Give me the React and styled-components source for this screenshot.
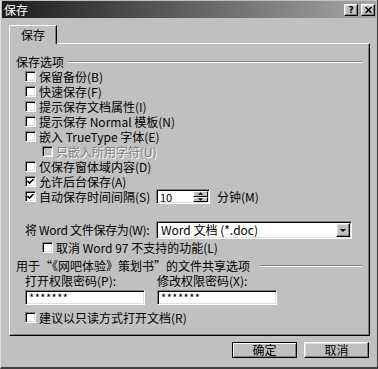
import React from 'react'
import styled, { createGlobalStyle, css } from 'styled-components'

const GlobalStyle = createGlobalStyle`
  html, body {
    margin: 0;
    padding: 0;
    background: #c0c0c0;
  }
  body {
    font-family: "Noto Sans CJK SC", "Noto Sans", sans-serif;
    font-size: 12px;
    color: #000;
  }
`

const raised = css`
  border: 1px solid;
  border-color: #fff #000 #000 #fff;
  box-shadow: inset -1px -1px #808080, inset 1px 1px #dfdfdf;
`
const sunken = css`
  border: 1px solid;
  border-color: #808080 #fff #fff #808080;
  box-shadow: inset 1px 1px #000, inset -1px -1px #dfdfdf;
`

const Dialog = styled.div`
  width: 378px;
  height: 369px;
  box-sizing: border-box;
  background: #c0c0c0;
  border-left: 1px solid #dfdfdf;
  border-right: 1px solid #404040;
  border-bottom: 2px solid #404040;
  padding: 1px 1px 0 1px;
  display: flex;
  flex-direction: column;
`
const TitleBar = styled.div`
  height: 17px;
  display: flex;
  align-items: center;
  padding: 0 1px 0 2px;
  background: linear-gradient(to right, #1c1c1c, #a6a6a6);
`
const Title = styled.span`
  color: #fff;
  font-size: 12px;
  line-height: 17px;
`
const TitleButtons = styled.div`
  margin-left: auto;
  display: flex;
  gap: 3px;
`
const TitleButton = styled.div`
  width: 14px;
  height: 12px;
  box-sizing: border-box;
  ${raised};
  background: #c0c0c0;
  display: flex;
  align-items: center;
  justify-content: center;
  font-family: "DejaVu Sans", sans-serif;
  font-weight: bold;
  font-size: 9px;
  line-height: 10px;
`
const TabStrip = styled.div`
  display: flex;
  padding: 7px 0 0 7px;
`
const Tab = styled.div`
  position: relative;
  z-index: 1;
  width: 48px;
  height: 19px;
  margin-bottom: -1px;
  box-sizing: border-box;
  background: #c0c0c0;
  border-left: 1px solid #fff;
  border-top: 1px solid #fff;
  border-right: 1px solid #000;
  border-top-left-radius: 2px;
  box-shadow: inset -1px 0 #808080;
  text-align: center;
  line-height: 17px;
`
const Panel = styled.div`
  margin-left: 7px;
  width: 361px;
  height: 293px;
  box-sizing: border-box;
  border: 1px solid;
  border-color: #fff #000 #000 #fff;
  box-shadow: inset -1px -1px #808080;
  padding: 11px 0 0 6px;
`
const Legend = styled.div`
  display: flex;
  align-items: center;
  height: 14px;
  line-height: 14px;
  margin: ${p => p.$top || 0}px 7px 0 0;
  white-space: nowrap;
`
const Etched = styled.div`
  flex: 1;
  margin-left: ${p => p.$gap || 4}px;
  border-top: 1px solid #808080;
  border-bottom: 1px solid #fff;
`
const Row = styled.div`
  display: flex;
  align-items: center;
  height: ${p => p.$h || 15}px;
  margin-left: ${p => p.$indent || 9}px;
  margin-top: ${p => p.$top || 0}px;
  white-space: nowrap;
`
const Box = styled.div`
  width: 11px;
  height: 11px;
  flex: 0 0 11px;
  box-sizing: border-box;
  ${sunken};
  background: ${p => (p.$disabled ? '#c0c0c0' : '#fff')};
  display: flex;
  align-items: center;
  justify-content: center;
`
const Label = styled.span`
  margin-left: 3px;
  line-height: 14px;
  flex: ${p => (p.$w ? `0 0 ${p.$w}px` : '0 0 auto')};
  color: ${p => (p.$disabled ? '#808080' : '#000')};
  text-shadow: ${p => (p.$disabled ? '1px 1px #fff' : 'none')};
`
const Text = styled.span`
  line-height: 14px;
  margin-left: ${p => p.$gap || 0}px;
  flex: ${p => (p.$w ? `0 0 ${p.$w}px` : '0 0 auto')};
  letter-spacing: ${p => p.$tight ? '-0.3px' : 'normal'};
`
const SpinBox = styled.div`
  width: 54px;
  height: 15px;
  box-sizing: border-box;
  ${sunken};
  background: #fff;
  display: flex;
  padding: 1px;
`
const Value = styled.span`
  flex: 1;
  padding-left: 2px;
  line-height: 12px;
  font-size: 11px;
`
const Spinner = styled.div`
  width: 15px;
  display: flex;
  flex-direction: column;
`
const SpinButton = styled.div`
  flex: 1;
  box-sizing: border-box;
  border: 1px solid;
  border-color: #fff #000 #000 #fff;
  background: #c0c0c0;
  display: flex;
  align-items: center;
  justify-content: center;
`
const Combo = styled.div`
  width: 196px;
  height: 18px;
  box-sizing: border-box;
  ${sunken};
  background: #fff;
  display: flex;
  align-items: center;
  padding: 1px;
`
const ComboText = styled.span`
  flex: 1;
  padding-left: 3px;
  line-height: 14px;
`
const DropButton = styled.div`
  width: 14px;
  height: 14px;
  box-sizing: border-box;
  ${raised};
  background: #c0c0c0;
  display: flex;
  align-items: center;
  justify-content: center;
`
const FieldGrid = styled.div`
  display: grid;
  grid-template-columns: 132px 120px;
  margin: ${p => p.$top || 0}px 0 0 9px;
  height: ${p => p.$h}px;
  align-items: center;
  line-height: 14px;
`
const Field = styled.div`
  width: 120px;
  height: 15px;
  box-sizing: border-box;
  ${sunken};
  background: #fff;
  padding-left: 3px;
  font-size: 11px;
  line-height: 13px;
  letter-spacing: 0.5px;
`
const Footer = styled.div`
  display: flex;
  justify-content: flex-end;
  gap: 7px;
  padding: 6px 7px 0 0;
`
const Button = styled.div`
  width: 65px;
  height: 16px;
  box-sizing: border-box;
  background: #c0c0c0;
  ${raised};
  ${p => p.$default && css`
    border-color: #000;
    box-shadow: inset 1px 1px #fff, inset -1px -1px #808080;
  `}
  text-align: center;
  line-height: 14px;
`

const Check = () => (
  <svg width="7" height="7" viewBox="0 0 7 7">
    <path d="M0.5 3 L2.5 5 L6.5 1" fill="none" stroke="#000" strokeWidth="1.6" />
  </svg>
)

const Arrow = ({ up, size = 5 }) => (
  <svg width={size} height={Math.ceil(size / 2)} viewBox="0 0 6 3">
    <path d={up ? 'M0 3 L3 0 L6 3 Z' : 'M0 0 L6 0 L3 3 Z'} fill="#000" />
  </svg>
)

const CheckRow = ({ children, checked, disabled, indent, top }) => (
  <Row $indent={indent} $top={top}>
    <Box $disabled={disabled}>{checked && <Check />}</Box>
    <Label $disabled={disabled}>{children}</Label>
  </Row>
)

export default function App() {
  return (
    <>
      <GlobalStyle />
      <Dialog>
        <TitleBar>
          <Title>保存</Title>
          <TitleButtons>
            <TitleButton>?</TitleButton>
            <TitleButton>
              <svg width="7" height="6" viewBox="0 0 7 6">
                <path d="M0.5 0 L6.5 6 M6.5 0 L0.5 6" stroke="#000" strokeWidth="1.4" />
              </svg>
            </TitleButton>
          </TitleButtons>
        </TitleBar>

        <TabStrip>
          <Tab>保存</Tab>
        </TabStrip>

        <Panel>
          <Legend>
            保存选项
            <Etched />
          </Legend>
          <CheckRow>保留备份(B)</CheckRow>
          <CheckRow>快速保存(F)</CheckRow>
          <CheckRow>提示保存文档属性(I)</CheckRow>
          <CheckRow>提示保存 Normal 模板(N)</CheckRow>
          <CheckRow>嵌入 TrueType 字体(E)</CheckRow>
          <CheckRow indent={26} disabled>只嵌入所用字符(U)</CheckRow>
          <CheckRow>仅保存窗体域内容(D)</CheckRow>
          <CheckRow checked>允许后台保存(A)</CheckRow>
          <Row>
            <Box><Check /></Box>
            <Label $w={117}>自动保存时间间隔(S)</Label>
            <SpinBox>
              <Value>10</Value>
              <Spinner>
                <SpinButton><Arrow up size={5} /></SpinButton>
                <SpinButton><Arrow size={5} /></SpinButton>
              </Spinner>
            </SpinBox>
            <Text $gap={7}>分钟(M)</Text>
          </Row>

          <Row $top={17} $h={18}>
            <Text $w={131} $tight>将 Word 文件保存为(W):</Text>
            <Combo>
              <ComboText>Word 文档 (*.doc)</ComboText>
              <DropButton><Arrow size={6} /></DropButton>
            </Combo>
          </Row>
          <CheckRow indent={26} top={1}>取消 Word 97 不支持的功能(L)</CheckRow>

          <Legend $top={4}>
            用于“《网吧体验》策划书”的文件共享选项
            <Etched $gap={10} />
          </Legend>
          <FieldGrid $h={14} $top={1}>
            <span>打开权限密码(P):</span>
            <span>修改权限密码(X):</span>
          </FieldGrid>
          <FieldGrid $h={15} $top={2}>
            <Field>*******</Field>
            <Field>*******</Field>
          </FieldGrid>
          <CheckRow top={5}>建议以只读方式打开文档(R)</CheckRow>
        </Panel>

        <Footer>
          <Button $default>确定</Button>
          <Button>取消</Button>
        </Footer>
      </Dialog>
    </>
  )
}
